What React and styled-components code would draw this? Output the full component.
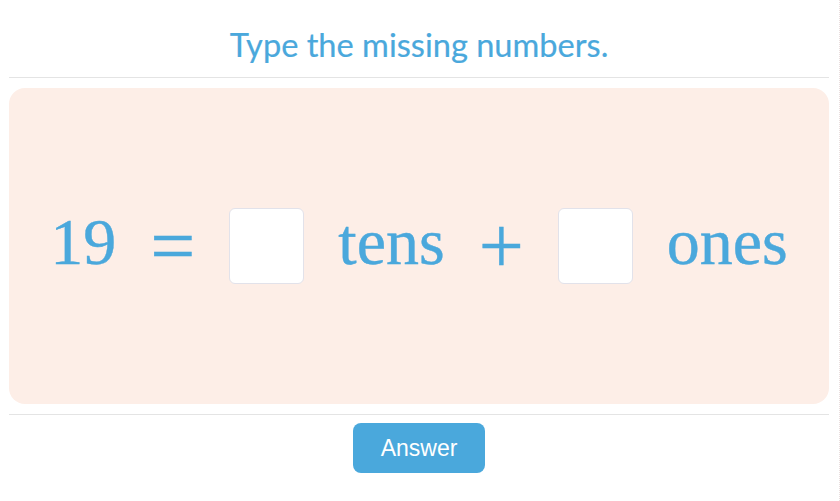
import React from "react";
import styled, { createGlobalStyle } from "styled-components";

const Global = createGlobalStyle`
  html, body { margin: 0; padding: 0; background: #ffffff; }
  body { font-family: Lato, "Liberation Sans", sans-serif; }
`;

const Page = styled.div`
  width: 840px;
  height: 501px;
  box-sizing: border-box;
  padding: 0 10px 0 9px;
  border-right: 1px dotted #eadede;
  display: flex;
  flex-direction: column;
`;

const Header = styled.div`
  height: 78px;
  border-bottom: 1px solid #e4e4e4;
  display: flex;
  align-items: center;
  justify-content: center;
  padding-top: 12px;
  box-sizing: border-box;
`;

const Title = styled.h1`
  margin: 0;
  font-family: Lato, "Liberation Sans", sans-serif;
  font-weight: 400;
  font-size: 32.6px;
  color: #4aa8dc;
  -webkit-text-stroke: 0.2px #4aa8dc;
`;

const Card = styled.div`
  margin-top: 10px;
  height: 316px;
  background: #fdeee7;
  border-radius: 16px;
  display: flex;
  align-items: center;
  justify-content: center;
  gap: 34px;
`;

const Term = styled.span`
  font-family: "Liberation Serif", "Times New Roman", serif;
  font-size: ${(p) => p.$size || 66}px;
  line-height: 1;
  padding-bottom: ${(p) => (p.$size ? 1 : 9)}px;
  color: #4aa8dc;
  -webkit-text-stroke: 0.4px #4aa8dc;
`;

const Blank = styled.input`
  width: 75px;
  height: 76px;
  box-sizing: border-box;
  border: 1px solid #e2e2ea;
  border-radius: 6px;
  background: #ffffff;
  outline: none;
  padding: 0;
  margin: 0;
`;

const Footer = styled.div`
  margin-top: 10px;
  border-top: 1px solid #e4e4e4;
  display: flex;
  justify-content: center;
  padding-top: 8px;
`;

const Button = styled.button`
  width: 132px;
  height: 50px;
  border: none;
  border-radius: 8px;
  background: #4aa8dc;
  color: #ffffff;
  font-family: "Liberation Sans", Arial, sans-serif;
  font-size: 23px;
  cursor: pointer;
`;

export default function App() {
  return (
    <>
      <Global />
      <Page>
        <Header>
          <Title>Type the missing numbers.</Title>
        </Header>
        <Card>
          <Term>19</Term>
          <Term $size={80}>=</Term>
          <Blank aria-label="tens" />
          <Term>tens</Term>
          <Term $size={80}>+</Term>
          <Blank aria-label="ones" />
          <Term>ones</Term>
        </Card>
        <Footer>
          <Button>Answer</Button>
        </Footer>
      </Page>
    </>
  );
}
